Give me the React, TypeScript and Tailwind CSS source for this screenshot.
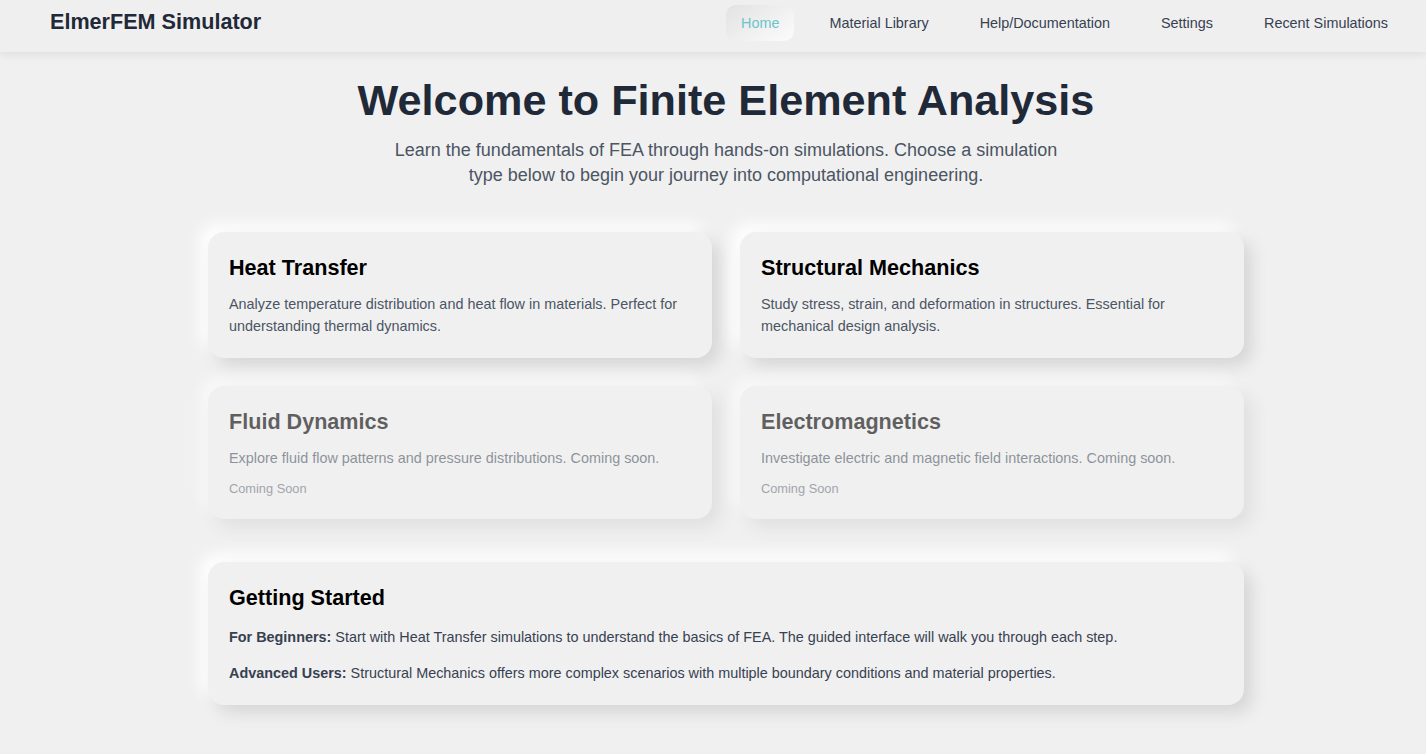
const navItems = ["Home", "Material Library", "Help/Documentation", "Settings", "Recent Simulations"];

const cards = [
    {
        title: "Heat Transfer",
        text: "Analyze temperature distribution and heat flow in materials. Perfect for understanding thermal dynamics.",
        soon: false,
    },
    {
        title: "Structural Mechanics",
        text: "Study stress, strain, and deformation in structures. Essential for mechanical design analysis.",
        soon: false,
    },
    {
        title: "Fluid Dynamics",
        text: "Explore fluid flow patterns and pressure distributions. Coming soon.",
        soon: true,
    },
    {
        title: "Electromagnetics",
        text: "Investigate electric and magnetic field interactions. Coming soon.",
        soon: true,
    },
];

const NavBar = () => {
    return (
        <header className="relative z-10 h-[52px] flex items-start justify-between pl-[50px] pr-[22px] bg-[#efefef] shadow-[0_3px_8px_rgba(0,0,0,0.07)]">
            <div className="mt-[8.6px] text-[21.6px] leading-[1.2] font-bold text-[#1f2937]">ElmerFEM Simulator</div>
            <ul className="flex items-center gap-[19px] mt-[5px]">
                {navItems.map((item, i) => (
                    <li key={item}>
                        <a
                            href="#"
                            className={
                                i === 0
                                    ? "block px-[15px] py-2 text-[14.4px] leading-[20px] rounded-[10px] text-[#6cc4cb] bg-[linear-gradient(145deg,#e2e2e2,#fcfcfc)]"
                                    : "block px-4 py-2 text-[14.4px] leading-[20px] rounded-[10px] text-[#374151]"
                            }
                        >
                            {item}
                        </a>
                    </li>
                ))}
            </ul>
        </header>
    );
};

const Card = ({ title, text, soon }: { title: string; text: string; soon: boolean }) => {
    return (
        <div
            className={
                "rounded-[16px] bg-[#f0f0f0] px-[21px] pt-[23px] pb-[21px] shadow-[8px_8px_16px_#d6d6d6,-8px_-8px_16px_#ffffff]" +
                (soon ? " opacity-60" : "")
            }
        >
            <h2 className="text-[21.6px] leading-[1.2] font-bold text-black mb-[13px]">{title}</h2>
            <p className="text-[14.4px] leading-[21.6px] text-[#4b5563]">{text}</p>
            {soon && <div className="mt-[9px] text-[12.8px] leading-[19px] text-[#6b7280]">Coming Soon</div>}
        </div>
    );
};

export default function App() {
    return (
        <div className="min-h-screen bg-[#f0f0f0] font-['Liberation_Sans',Arial,sans-serif]">
            <NavBar />
            <main className="max-w-[1062px] mx-auto pl-[26px] pt-[23px] pb-[48px]">
                <section className="text-center mb-[44px]">
                    <h1 className="text-[43.2px] leading-[1.2] font-bold text-[#1f2937] mb-[11px]">
                        Welcome to Finite Element Analysis
                    </h1>
                    <p className="max-w-[680px] mx-auto text-[18px] leading-[25.2px] text-[#4b5563]">
                        Learn the fundamentals of FEA through hands-on simulations. Choose a simulation type below to
                        begin your journey into computational engineering.
                    </p>
                </section>

                <div className="grid grid-cols-2 gap-[28px]">
                    {cards.map((c) => (
                        <Card key={c.title} {...c} />
                    ))}
                </div>

                <section className="mt-[43px] rounded-[16px] bg-[#f0f0f0] px-[21px] pt-[23px] pb-[21px] shadow-[8px_8px_16px_#d6d6d6,-8px_-8px_16px_#ffffff]">
                    <h2 className="text-[21.6px] leading-[1.2] font-bold text-black mb-[16px]">Getting Started</h2>
                    <p className="text-[14.4px] leading-[21.6px] text-[#374151] mb-[14.4px]">
                        <strong>For Beginners:</strong> Start with Heat Transfer simulations to understand the basics of
                        FEA. The guided interface will walk you through each step.
                    </p>
                    <p className="text-[14.4px] leading-[21.6px] text-[#374151]">
                        <strong>Advanced Users:</strong> Structural Mechanics offers more complex scenarios with multiple
                        boundary conditions and material properties.
                    </p>
                </section>
            </main>
        </div>
    );
}
